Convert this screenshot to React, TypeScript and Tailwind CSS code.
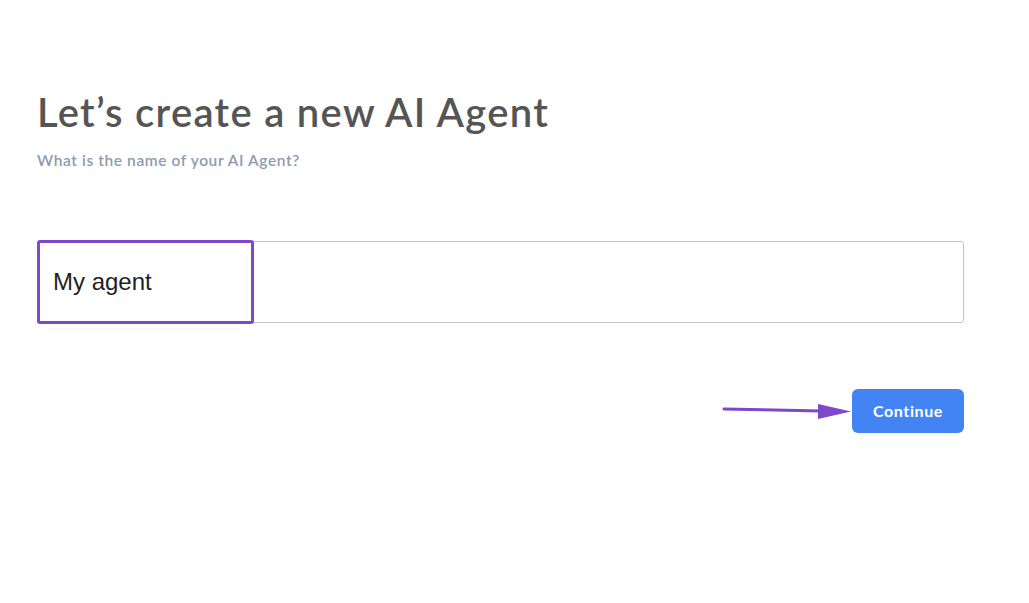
import React, { useState } from "react";

export default function App() {
  const [name, setName] = useState("My agent");

  return (
    <div className="w-[1029px] h-[603px] bg-white font-['Lato',sans-serif]">
      <div className="pl-[37px] pr-[65px] pt-[88px]">
        {/* Header */}
        <h1 className="text-[40px] leading-[48px] font-semibold text-[#555555] tracking-[1.3px]">
          Let’s create a new AI Agent
        </h1>
        <p className="mt-[14px] text-[15.5px] leading-[20px] font-semibold text-[#8d9bb0] tracking-[0.6px]">
          What is the name of your AI Agent?
        </p>

        {/* Name input */}
        <div className="relative mt-[71px]">
          <input
            value={name}
            onChange={(e) => setName(e.target.value)}
            className="w-full h-[82px] border border-[#c6c6c6] rounded-[3px] pl-[15px] text-[24px] text-[#1f1f1f] font-['Liberation_Sans',sans-serif] outline-none"
          />
          <div className="absolute left-0 top-[-1px] w-[217px] h-[84px] border-[3px] border-[#7f47c9] rounded-[3px] pointer-events-none" />
        </div>

        {/* Actions */}
        <div className="relative flex justify-end mt-[66px]">
          <svg
            className="absolute left-[685px] top-[10px]"
            width="130"
            height="24"
            viewBox="0 0 130 24"
          >
            <line x1="2" y1="10" x2="100" y2="12" stroke="#7f47c9" strokeWidth="3" strokeLinecap="round" />
            <polygon points="96,5 129,12.5 96,20" fill="#7f47c9" />
          </svg>
          <button className="h-[44px] w-[112px] rounded-[6px] bg-[#4384f5] text-white text-[16px] font-bold tracking-[0.6px]">
            Continue
          </button>
        </div>
      </div>
    </div>
  );
}
